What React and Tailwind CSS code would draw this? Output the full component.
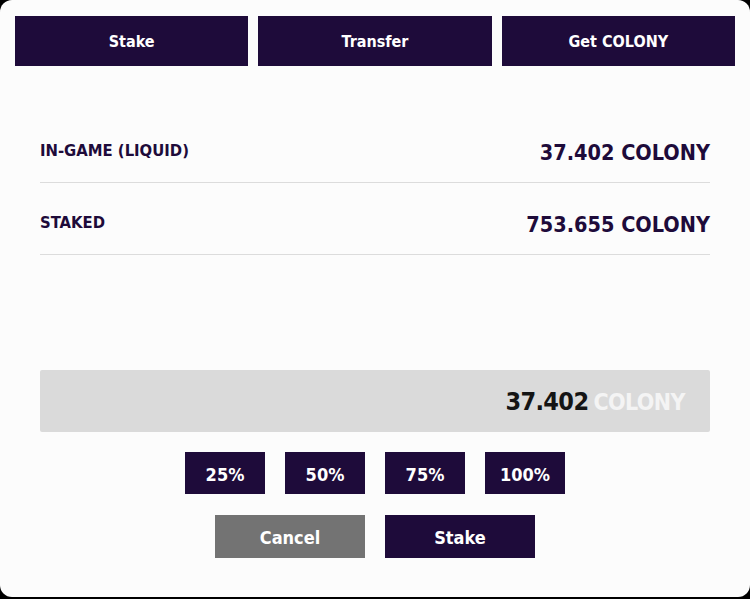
export default function App() {
  const font = { fontFamily: '"DejaVu Sans Condensed", "DejaVu Sans", sans-serif' }

  return (
    <div className="w-[750px] h-[599px] bg-black" style={font}>
      <div className="w-[750px] h-[597px] bg-[#fcfcfc] rounded-[12px] px-[15px] pt-[16px]">
        <div className="grid grid-cols-3 gap-[10px]">
          {['Stake', 'Transfer', 'Get COLONY'].map((t) => (
            <button
              key={t}
              className="h-[50px] bg-[#1e0b3a] text-white text-[16px] font-bold pt-[2px]"
            >
              {t}
            </button>
          ))}
        </div>

        <div className="px-[25px] mt-[45px]">
          <div className="h-[72px] flex items-center justify-between border-b border-[#dcdcdc] pt-[14px]">
            <span className="text-[16.5px] font-bold text-[#1e0b3a] -mt-[4px]">IN-GAME (LIQUID)</span>
            <span className="text-[21.5px] font-bold text-[#1e0b3a]">37.402 COLONY</span>
          </div>
          <div className="h-[72px] flex items-center justify-between border-b border-[#dcdcdc] pt-[14px]">
            <span className="text-[16.5px] font-bold text-[#1e0b3a] -mt-[4px]">STAKED</span>
            <span className="text-[21.5px] font-bold text-[#1e0b3a]">753.655 COLONY</span>
          </div>

          <div className="mt-[115px] h-[62px] bg-[#dadada] rounded-[2px] flex items-center justify-end pr-[25px] gap-[5px] pt-[2px]">
            <span className="text-[25px] font-bold text-[#141414] tracking-tight">37.402</span>
            <span className="text-[23px] font-bold text-[#f4f4f4] tracking-tight">COLONY</span>
          </div>

          <div className="mt-[20px] flex justify-center gap-[20px]">
            {['25%', '50%', '75%', '100%'].map((p) => (
              <button
                key={p}
                className="w-[80px] h-[42px] bg-[#1e0b3a] text-white text-[18px] font-bold pt-[3px]"
              >
                {p}
              </button>
            ))}
          </div>

          <div className="mt-[21px] flex justify-center gap-[20px]">
            <button className="w-[150px] h-[43px] bg-[#737373] text-white text-[18px] font-bold pt-[2px]">
              Cancel
            </button>
            <button className="w-[150px] h-[43px] bg-[#1e0b3a] text-white text-[18px] font-bold pt-[2px]">
              Stake
            </button>
          </div>
        </div>
      </div>
    </div>
  )
}
